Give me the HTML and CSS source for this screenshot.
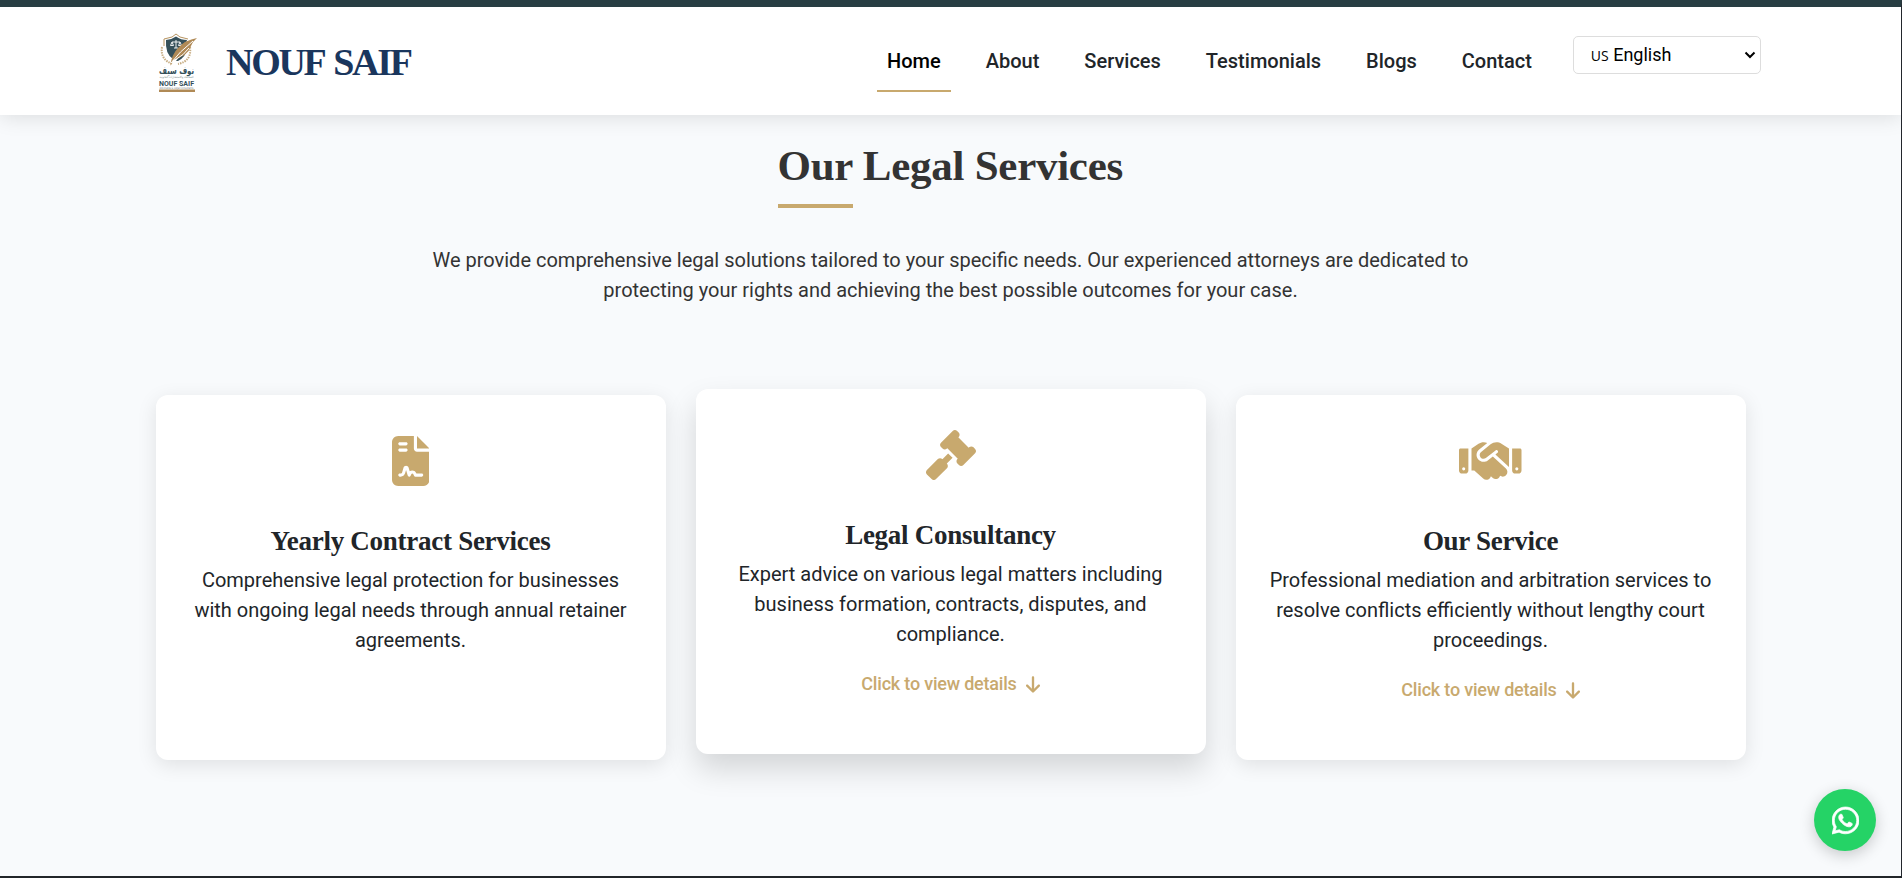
FILE: index.html
```html
<!DOCTYPE html>
<html lang="en">
<head>
<meta charset="utf-8">
<title>Nouf Saif</title>
<link rel="stylesheet" href="styles.css">
</head>
<body>
<div class="page">
  <header class="header">
    <a class="brand">
      <svg class="logo" viewBox="0 0 40 60" width="40" height="60">
        <path d="M6 5L14 3L18 0L22 3L30 5M6 5V12" fill="none" stroke="#b79461" stroke-width="1"/>
        <path d="M8 6Q14 5.500 18 2.500Q23 6 29 6L28 9L15 25Q7 20 8 6Z" fill="#35505a"/>
        <path d="M29 14Q28 23 20 27L18 27L28 14Z" fill="#35505a"/>
        <path d="M14 8H22M18 6V14M14 8L12.500 11.500H15.500ZM22 8L20.500 11.500H23.500ZM16 14H20" fill="none" stroke="#fff" stroke-width=".9"/>
        <path d="M4 13Q2 26 15 30M32 13Q34 27 20 30" fill="none" stroke="#c7ad84" stroke-width="2" stroke-dasharray="1.5 1"/>
        <path d="M39 4Q27 6 20 14Q14 20 12 32L15 26Q30 22 33 12Q35 7 39 4Z" fill="#b08a56"/>
        <path d="M13 29Q21 18 35 7M17 26Q26 21 31 14" fill="none" stroke="#fff" stroke-width="1"/>
        <text class="logo-ar" x="18.500" y="39.500" text-anchor="middle" textLength="35" lengthAdjust="spacingAndGlyphs">نوف سيف</text>
        <text class="logo-tiny" x="18.500" y="44" text-anchor="middle" textLength="34" lengthAdjust="spacingAndGlyphs">للمحاماة والاستشارات القانونية</text>
        <text class="logo-en" x="18.500" y="51.500" text-anchor="middle" textLength="35" lengthAdjust="spacingAndGlyphs">NOUF SAIF</text>
        <text class="logo-tiny" x="18.500" y="54.500" text-anchor="middle" textLength="34" lengthAdjust="spacingAndGlyphs">Advocates &amp; Legal Consultants</text>
        <rect x="1" y="55.500" width="36" height="2.500" fill="#b08a56"/>
      </svg>
      <span class="brand-name">NOUF SAIF</span>
    </a>
    <nav class="nav">
      <a class="link active">Home</a>
      <a class="link">About</a>
      <a class="link">Services</a>
      <a class="link">Testimonials</a>
      <a class="link">Blogs</a>
      <a class="link">Contact</a>
    </nav>
    <div class="lang"><span><small>US</small> English</span>
      <svg width="12" height="8" viewBox="0 0 12 8"><path d="M1.500 1.500L6 6L10.500 1.500" fill="none" stroke="#000" stroke-width="2"/></svg>
    </div>
  </header>
  <main class="main">
    <h2 class="title">Our Legal Services</h2>
    <p class="intro">We provide comprehensive legal solutions tailored to your specific needs. Our experienced attorneys are dedicated to protecting your rights and achieving the best possible outcomes for your case.</p>
    <section class="cards">
      <article class="card">
        <svg class="icon" viewBox="0 0 384 512"><path d="M64 0C28.700 0 0 28.700 0 64V448c0 35.300 28.700 64 64 64H320c35.300 0 64-28.700 64-64V160H256c-17.700 0-32-14.300-32-32V0H64zM256 0V128H384L256 0zM80 64h64c8.800 0 16 7.200 16 16s-7.200 16-16 16H80c-8.800 0-16-7.200-16-16s7.200-16 16-16zm0 64h64c8.800 0 16 7.200 16 16s-7.200 16-16 16H80c-8.800 0-16-7.200-16-16s7.200-16 16-16zm54.200 253.800c-6.100 20.300-24.800 34.200-46 34.200H80c-8.800 0-16-7.200-16-16s7.200-16 16-16h8.200c7.100 0 13.300-4.600 15.300-11.400l14.900-49.500c3.400-11.300 13.800-19.100 25.600-19.100s22.200 7.700 25.600 19.100l11.600 38.600c7.400-6.200 16.800-9.700 26.800-9.700c15.900 0 30.400 9 37.500 23.200l4.400 8.800H304c8.800 0 16 7.200 16 16s-7.200 16-16 16H240c-6.100 0-11.600-3.400-14.300-8.800l-8.800-17.700c-1.700-3.400-5.100-5.500-8.800-5.500s-7.200 2.100-8.800 5.500l-8.800 17.700c-2.900 5.900-9.200 9.400-15.700 8.800s-12.100-5.100-13.900-11.300L144 349l-9.800 32.800z"/></svg>
        <h3 class="card-title">Yearly Contract Services</h3>
        <p class="card-text">Comprehensive legal protection for businesses with ongoing legal needs through annual retainer agreements.</p>
      </article>
      <article class="card raised">
        <svg class="icon" viewBox="0 0 512 512"><path d="M318.600 9.400c-12.500-12.500-32.800-12.500-45.300 0l-120 120c-12.500 12.500-12.500 32.800 0 45.300l16 16c12.500 12.500 32.800 12.500 45.300 0l4-4L325.400 293.400l-4 4c-12.500 12.500-12.500 32.800 0 45.300l16 16c12.500 12.500 32.800 12.500 45.300 0l120-120c12.500-12.500 12.500-32.800 0-45.300l-16-16c-12.500-12.500-32.800-12.500-45.300 0l-4 4L330.600 74.600l4-4c12.500-12.500 12.500-32.800 0-45.300l-16-16zm-152 288c-12.500-12.500-32.800-12.500-45.300 0l-112 112c-12.500 12.500-12.500 32.800 0 45.300l48 48c12.500 12.500 32.800 12.500 45.300 0l112-112c12.500-12.500 12.500-32.800 0-45.300l-1.400-1.400L272 285.300 226.700 240 168 298.700l-1.400-1.400z"/></svg>
        <h3 class="card-title">Legal Consultancy</h3>
        <p class="card-text">Expert advice on various legal matters including business formation, contracts, disputes, and compliance.</p>
        <a class="more">Click to view details <svg class="arrow" viewBox="0 0 384 512"><path d="M169.400 470.600c12.500 12.500 32.800 12.500 45.300 0l160-160c12.500-12.500 12.500-32.800 0-45.300s-32.800-12.500-45.300 0L224 370.800 224 64c0-17.700-14.300-32-32-32s-32 14.300-32 32l0 306.700L54.600 265.400c-12.500-12.500-32.800-12.500-45.300 0s-12.500 32.800 0 45.300l160 160z"/></svg></a>
      </article>
      <article class="card">
        <svg class="icon" viewBox="0 0 640 512"><path d="M323.400 85.200l-96.800 78.400c-16.100 13-19.200 36.400-7 53.100c12.900 17.800 38 21.300 55.300 7.800l99.300-77.200c7-5.400 17-4.200 22.500 2.800s4.200 17-2.800 22.500l-20.900 16.200L512 316.800V128h-.7l-3.900-2.500L434.800 79c-15.300-9.800-33.200-15-51.400-15c-21.800 0-43 7.500-60 21.200zm22.800 124.400l-51.700 40.200C263 274.300 217.300 268 193.700 235.600c-22.200-30.500-16.600-73.100 12.700-96.800l83.200-67.300c-11.600-4.900-24.100-7.400-36.800-7.400C234 64 215.700 69.600 200 80l-72 48V352h28.200l91.400 83.400c19.600 17.900 49.900 16.500 67.800-3.100c5.500-6.100 9.200-13.200 11.100-20.600l17 15.600c19.500 17.900 49.900 16.600 67.800-2.900c4.500-4.900 7.800-10.600 9.900-16.500c19.400 13 45.800 10.300 62.100-7.500c17.900-19.500 16.600-49.900-2.900-67.800l-134.200-123zM16 128c-8.800 0-16 7.200-16 16V352c0 17.700 14.300 32 32 32H64c17.700 0 32-14.300 32-32V128H16zM48 320a16 16 0 1 1 0 32 16 16 0 1 1 0-32zM544 128V352c0 17.700 14.300 32 32 32h32c17.700 0 32-14.300 32-32V144c0-8.800-7.200-16-16-16H544zm32 208a16 16 0 1 1 32 0 16 16 0 1 1 -32 0z"/></svg>
        <h3 class="card-title">Our Service</h3>
        <p class="card-text">Professional mediation and arbitration services to resolve conflicts efficiently without lengthy court proceedings.</p>
        <a class="more">Click to view details <svg class="arrow" viewBox="0 0 384 512"><path d="M169.400 470.600c12.500 12.500 32.800 12.500 45.300 0l160-160c12.500-12.500 12.500-32.800 0-45.300s-32.800-12.500-45.300 0L224 370.800 224 64c0-17.700-14.300-32-32-32s-32 14.300-32 32l0 306.700L54.600 265.400c-12.500-12.500-32.800-12.500-45.300 0s-12.500 32.800 0 45.300l160 160z"/></svg></a>
      </article>
    </section>
  </main>
  <a class="whatsapp"><svg width="27" height="31" viewBox="0 0 448 512"><path d="M380.900 97.100C339 55.100 283.200 32 223.900 32c-122.400 0-222 99.600-222 222 0 39.100 10.200 77.300 29.600 111L0 480l117.700-30.900c32.400 17.700 68.900 27 106.100 27h.1c122.300 0 224.100-99.600 224.100-222 0-59.300-25.200-115-67.100-157zm-157 341.600c-33.200 0-65.700-8.900-94-25.700l-6.700-4-69.800 18.300L72 359.200l-4.400-7c-18.500-29.400-28.200-63.300-28.200-98.200 0-101.700 82.800-184.500 184.600-184.500 49.300 0 95.600 19.200 130.400 54.100 34.800 34.900 56.200 81.200 56.100 130.500 0 101.800-84.900 184.600-186.600 184.600zm101.200-138.200c-5.500-2.800-32.800-16.200-37.900-18-5.100-1.900-8.800-2.800-12.500 2.800-3.700 5.600-14.300 18-17.600 21.800-3.200 3.700-6.500 4.200-12 1.400-32.600-16.300-54-29.100-75.500-66-5.700-9.800 5.700-9.100 16.300-30.300 1.800-3.700.9-6.900-.5-9.700-1.400-2.800-12.500-30.100-17.100-41.200-4.500-10.800-9.100-9.300-12.500-9.500-3.200-.2-6.900-.2-10.600-.2-3.700 0-9.700 1.400-14.800 6.900-5.100 5.600-19.400 19-19.400 46.300 0 27.300 19.900 53.700 22.600 57.400 2.800 3.700 39.100 59.700 94.800 83.800 35.200 15.200 49 16.500 66.600 13.900 10.700-1.600 32.800-13.400 37.400-26.400 4.600-13 4.600-24.100 3.200-26.400-1.300-2.500-5-3.900-10.500-6.600z" fill="#fff" stroke="#fff" stroke-width="12"/></svg></a>
</div>
</body>
</html>
```
FILE: styles.css
```css
* { box-sizing: border-box; }
body { margin: 0; font-family: Roboto, sans-serif; font-size: 20px; line-height: 30px; color: #212529; background: #f8fafc; }
h2, h3, p { margin: 0; }
.page { position: relative; height: 878px; overflow: hidden; border-top: 7px solid #283e43; border-right: 1px solid #22262c; border-bottom: 2px solid #212529; }
.header { position: relative; display: flex; align-items: flex-start; height: 108px; padding-left: 158px; background: #fff; box-shadow: 0 2px 20px rgba(0,0,0,.12); }
.brand { display: flex; align-items: flex-start; width: 719px; padding-top: 27px; }
.logo { flex: none; overflow: visible; }
.logo-ar { font: bold 10px "DejaVu Sans", sans-serif; fill: #35505a; }
.logo-en { font: bold 8px Roboto, sans-serif; fill: #35505a; }
.logo-tiny { font: 3px "DejaVu Sans", sans-serif; fill: #7a8588; }
.brand-name { margin: 8px 0 0 28px; font: bold 38px/40px "Liberation Serif", serif; letter-spacing: -2.3px; word-spacing: 3px; color: #1a365d; white-space: nowrap; }
.nav { display: flex; gap: 25px; padding-top: 29px; }
.link { height: 56px; padding: 10px 10px 0; font-weight: 500; border-bottom: 2px solid transparent; }
.active { color: #000; border-color: #c8a96e; }
.lang { display: flex; align-items: center; justify-content: space-between; width: 188px; height: 38px; margin: 29px 0 0 31px; padding: 0 4px 0 17px; border: 1px solid #ddd; border-radius: 5px; font-size: 18px; color: #000; }
.lang small { font: 14px "Open Sans", sans-serif; }
.main { display: flex; flex-direction: column; align-items: center; padding-top: 23px; }
.title { width: 346px; height: 70px; font: bold 43px/56px "Liberation Serif", serif; letter-spacing: -.27px; color: #333; white-space: nowrap; }
.title::after { content: ""; display: block; width: 75px; height: 4px; margin-top: 10px; background: #c8a96e; }
.intro { width: 1060px; margin-top: 37px; text-align: center; color: #333; }
.cards { display: grid; grid-template-columns: repeat(3, 1fr); gap: 30px; width: 1590px; margin-top: 90px; }
.card { display: flex; flex-direction: column; align-items: center; height: 365px; padding: 41px 30px 0; border-radius: 12px; background: #fff; text-align: center; box-shadow: 0 5px 20px rgba(0,0,0,.1); }
.raised { transform: translateY(-6px); box-shadow: 0 15px 30px rgba(0,0,0,.15); }
.icon { flex: none; height: 50px; fill: #c8a96e; }
.card-title { margin-top: 38px; font: bold 27px/34px "Liberation Serif", serif; letter-spacing: -.27px; white-space: nowrap; }
.card-text { width: 450px; margin-top: 7px; }
.more { display: flex; align-items: center; gap: 9px; margin-top: 20px; font-size: 18px; font-weight: 500; letter-spacing: -.2px; color: #c8a96e; }
.arrow { width: 14px; height: 19px; fill: #c8a96e; }
.whatsapp { position: absolute; right: 25px; bottom: 25px; display: flex; align-items: center; justify-content: center; width: 62px; height: 62px; border-radius: 50%; background: #25d366; box-shadow: 0 4px 15px rgba(0,0,0,.2); }
```
